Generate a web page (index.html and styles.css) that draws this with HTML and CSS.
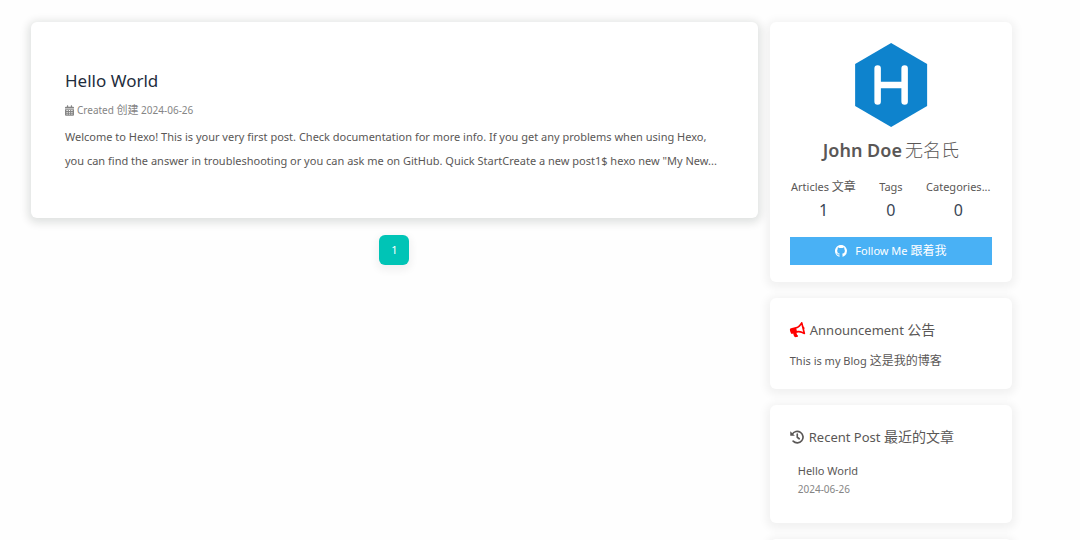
FILE: index.html
```html
<!DOCTYPE html>
<html lang="en">
<head>
<meta charset="utf-8">
<title>Hexo</title>
<link rel="stylesheet" href="styles.css">
</head>
<body>
<div class="layout">
  <main class="posts">
    <article class="card post">
      <h2 class="post-title"><a href="#">Hello World</a></h2>
      <div class="post-meta">
        <svg class="icon-calendar" viewBox="0 0 448 512" aria-hidden="true"><path fill="currentColor" fill-rule="evenodd" d="M96 16a16 16 0 0 1 16-16h32a16 16 0 0 1 16 16v48h128V16a16 16 0 0 1 16-16h32a16 16 0 0 1 16 16v48h52a48 48 0 0 1 48 48v48H0v-48a48 48 0 0 1 48-48h48zM0 192h448v272a48 48 0 0 1-48 48H48a48 48 0 0 1-48-48zM74 232v46h62v-46zM193 232v46h62v-46zM312 232v46h62v-46zM74 326v46h62v-46zM193 326v46h62v-46zM312 326v46h62v-46zM74 414v46h62v-46zM193 414v46h62v-46zM312 414v46h62v-46z"/></svg>
        <span>Created <span class="meta-cjk">创建</span> <time datetime="2024-06-26">2024-06-26</time></span>
      </div>
      <p class="post-excerpt">Welcome to Hexo! This is your very first post. Check documentation for more info. If you get any problems when using Hexo, you can find the answer in troubleshooting or you can ask me on GitHub. Quick StartCreate a new post1$ hexo new "My New...</p>
    </article>
    <nav class="pagination" aria-label="Pages"><a class="page-number" href="#" aria-current="page">1</a></nav>
  </main>
  <aside class="sidebar">
    <section class="card author">
      <svg class="avatar" viewBox="0 0 72 84" role="img" aria-label="Hexo"><path fill="#0e83cd" d="M36 0 72 21v42L36 84 0 63V21z"/><path fill="none" stroke="#fff" stroke-width="6.5" stroke-linecap="round" d="M22.500 25.500v33M49.500 25.500v33M22.500 42h27"/></svg>
      <h1 class="author-name">John Doe<span class="author-cjk">无名氏</span></h1>
      <div class="stats">
        <a class="stat" href="#"><span class="stat-label">Articles <span class="cjk">文章</span></span><span class="stat-value">1</span></a>
        <a class="stat" href="#"><span class="stat-label">Tags</span><span class="stat-value">0</span></a>
        <a class="stat" href="#"><span class="stat-label">Categories...</span><span class="stat-value">0</span></a>
      </div>
      <a class="follow" href="#">
        <svg class="icon-github" viewBox="0 0 16 16" aria-hidden="true"><path fill="currentColor" d="M8 0C3.580 0 0 3.580 0 8c0 3.540 2.290 6.530 5.470 7.590.4.070.55-.17.55-.38 0-.19-.01-.82-.01-1.490-2.010.37-2.530-.49-2.690-.94-.09-.23-.48-.94-.82-1.130-.28-.15-.68-.52-.01-.53.63-.01 1.080.58 1.230.82.72 1.210 1.870.87 2.330.66.07-.52.28-.87.51-1.070-1.780-.2-3.640-.89-3.640-3.950 0-.87.31-1.590.82-2.150-.08-.2-.36-1.020.08-2.120 0 0 .67-.21 2.200.82a7.600 7.600 0 0 1 4 0c1.530-1.040 2.200-.82 2.200-.82.44 1.100.16 1.920.08 2.120.51.56.82 1.270.82 2.150 0 3.070-1.870 3.750-3.650 3.950.29.25.54.73.54 1.480 0 1.070-.01 1.930-.01 2.200 0 .21.15.46.55.38A8.010 8.010 0 0 0 16 8c0-4.420-3.580-8-8-8z"/></svg>
        <span>Follow Me <span class="cjk">跟着我</span></span>
      </a>
    </section>
    <section class="card widget announcement">
      <h3 class="widget-title">
        <svg class="icon-widget icon-bullhorn" viewBox="0 0 576 512" aria-hidden="true"><path fill="currentColor" d="M576 240c0-23.630-12.950-44.040-32-55.120V32.010C544 23.260 537.020 0 512 0c-7.120 0-14.190 2.380-19.980 7.020l-85.030 68.030C364.280 109.190 310.660 128 256 128H64c-35.350 0-64 28.650-64 64v96c0 35.350 28.650 64 64 64h33.700c-1.390 10.480-2.180 21.140-2.180 32 0 39.770 9.260 77.350 25.560 110.940 5.190 10.690 16.520 17.060 28.400 17.060h74.280c26.050 0 41.690-29.840 25.900-50.560-16.400-21.520-26.150-48.360-26.150-77.440 0-11.110 1.620-21.790 4.410-32H256c54.660 0 108.280 18.810 150.980 52.950l85.030 68.030a32.023 32.023 0 0 0 19.980 7.020c24.920 0 32-22.780 32-32V295.130C563.050 284.040 576 263.630 576 240zm-96 141.420l-33.050-26.440C392.950 311.780 325.120 288 256 288v-96c69.120 0 136.950-23.780 190.950-66.980L480 98.580v282.840z"/></svg>
        <span>Announcement <span class="title-cjk">公告</span></span>
      </h3>
      <p class="announcement-text">This is my Blog <span class="cjk">这是我的博客</span></p>
    </section>
    <section class="card widget recent">
      <h3 class="widget-title">
        <svg class="icon-widget" viewBox="0 0 16 16" aria-hidden="true"><path fill="none" stroke="currentColor" stroke-width="1.900" stroke-linecap="round" stroke-linejoin="round" d="M2.500 5A6.600 6.600 0 1 1 3.600 12.800M8.300 4.800v3.500l2.200 1.700"/><path fill="currentColor" d="M.3 1.300v5.200h5.300z"/></svg>
        <span>Recent Post <span class="title-cjk">最近的文章</span></span>
      </h3>
      <ul class="recent-list">
        <li class="recent-item"><a href="#">Hello World</a><time datetime="2024-06-26">2024-06-26</time></li>
      </ul>
    </section>
    <section class="card widget"></section>
  </aside>
</div>
</body>
</html>
```
FILE: styles.css
```css
* {
  box-sizing: border-box;
}

body {
  margin: 0;
  height: 100vh;
  overflow: hidden;
  background: #fefefe;
  color: #5a5756;
  font-family: "Noto Sans", "Noto Sans CJK SC", sans-serif;
  font-size: 11px;
  font-weight: 400;
}

a {
  color: inherit;
  text-decoration: none;
}

h1, h2, h3, p, ul {
  margin: 0;
  padding: 0;
  font-weight: 400;
}

svg {
  flex: none;
}

.cjk,
.meta-cjk,
.title-cjk {
  line-height: 1;
}

.cjk {
  font-size: 12px;
}

.meta-cjk {
  font-size: 11px;
}

.title-cjk {
  font-size: 14px;
}

.layout {
  display: grid;
  grid-template-columns: 3fr 1fr;
  align-items: start;
  gap: 12px;
  padding: 22px 68px 0 31px;
}

.card {
  background: #fff;
  border-radius: 6px;
  box-shadow: 0 2px 8px 4px rgba(7, 27, 17, 0.05);
}

.post {
  padding: 45px 34px;
  box-shadow: 0 2px 8px 3px rgba(7, 27, 17, 0.12);
}

.post-title {
  font-size: 17px;
  line-height: 28px;
  color: #1f2d3d;
}

.post-meta {
  display: flex;
  align-items: center;
  gap: 3px;
  margin-top: 5px;
  font-size: 10px;
  line-height: 20px;
  color: #858585;
}

.icon-calendar {
  width: 9px;
  height: 11px;
}

.post-excerpt {
  margin-top: 5px;
  line-height: 24px;
}

.pagination {
  display: flex;
  justify-content: center;
  margin-top: 17px;
}

.page-number {
  width: 30px;
  border-radius: 6px;
  background: #00c4b6;
  color: #fff;
  line-height: 30px;
  text-align: center;
  box-shadow: 0 3px 8px 2px rgba(7, 17, 27, 0.06);
}

.sidebar {
  display: grid;
  gap: 16px;
}

.author {
  display: flex;
  flex-direction: column;
  padding: 21px 20px 17px;
  text-align: center;
}

.avatar {
  height: 84px;
}

.author-name {
  margin-top: 9px;
  font-size: 18px;
  font-weight: 600;
  line-height: 28px;
}

.author-cjk {
  margin-left: 3px;
  font-weight: 300;
}

.stats {
  display: grid;
  grid-template-columns: repeat(3, 1fr);
  margin-top: 12px;
}

.stat-label,
.stat-value {
  display: block;
  white-space: nowrap;
}

.stat-label {
  line-height: 22px;
}

.stat-value {
  font-size: 16px;
  line-height: 24px;
  color: #3a4655;
}

.follow {
  display: flex;
  align-items: center;
  justify-content: center;
  gap: 8px;
  margin-top: 15px;
  background: #49b1f5;
  color: #fff;
  line-height: 28px;
}

.icon-github {
  width: 12px;
  height: 12px;
}

.widget {
  padding: 20px;
}

.widget-title {
  display: flex;
  align-items: center;
  gap: 5px;
  font-size: 13px;
  line-height: 24px;
}

.icon-widget {
  width: 14px;
  height: 14px;
}

.icon-bullhorn {
  width: 15px;
  color: #f00;
  transform: rotate(-14deg);
}

.announcement {
  padding-bottom: 17px;
}

.announcement-text {
  margin-top: 8px;
  line-height: 22px;
}

.recent-list {
  padding: 13px 8px 5px;
  list-style: none;
}

.recent-item a,
.recent-item time {
  display: block;
  line-height: 18px;
}

.recent-item time {
  font-size: 10px;
  color: #858585;
}
```
